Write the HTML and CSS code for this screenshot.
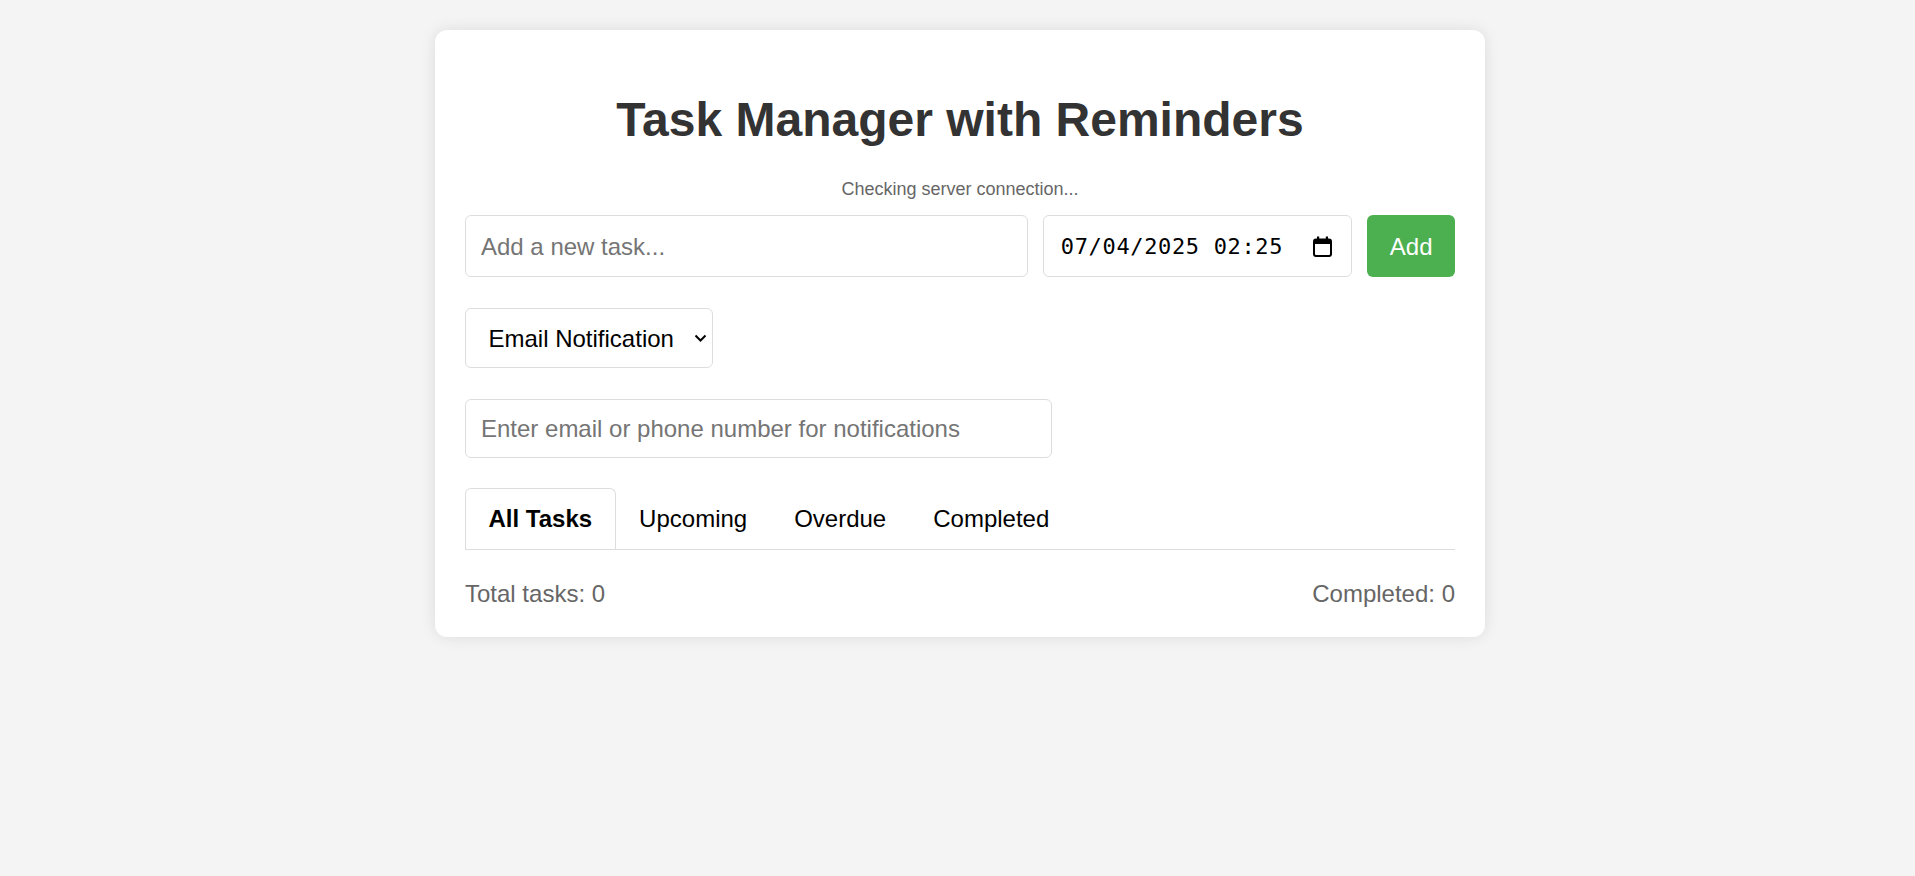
FILE: index.html
```html
<!DOCTYPE html>
<html lang="en">
<head>
<meta charset="utf-8">
<title>Task Manager with Reminders</title>
<link rel="stylesheet" href="styles.css">
</head>
<body>
<div class="container">
  <h1 class="title">Task Manager with Reminders</h1>
  <div class="status">Checking server connection...</div>
  <div class="task-row">
    <input class="field task-input" type="text" placeholder="Add a new task...">
    <div class="field date-box">
      <span class="date-text">07/04/2025 02:25</span>
      <svg class="cal-icon" width="19" height="21" viewBox="0 0 19 21" aria-hidden="true">
        <rect x="1" y="3.5" width="17" height="16.5" rx="2" fill="none" stroke="#000" stroke-width="2"/>
        <rect x="1" y="3.5" width="17" height="4.5" fill="#000"/>
        <rect x="4" y="0.5" width="2.2" height="4" fill="#000"/>
        <rect x="12.8" y="0.5" width="2.2" height="4" fill="#000"/>
      </svg>
    </div>
    <button class="add-btn" type="button">Add</button>
  </div>
  <div class="select-wrap">
    <select class="field notify-select">
      <option>Email Notification</option>
      <option>SMS Notification</option>
    </select>
    <svg class="chevron" width="15" height="10" viewBox="0 0 15 10" aria-hidden="true">
      <polyline points="2.5,2.5 7.5,7.5 12.5,2.5" fill="none" stroke="#000" stroke-width="2"/>
    </svg>
  </div>
  <input class="field contact-input" type="text" placeholder="Enter email or phone number for notifications">
  <div class="tabs">
    <div class="tab active">All Tasks</div>
    <div class="tab">Upcoming</div>
    <div class="tab">Overdue</div>
    <div class="tab">Completed</div>
  </div>
  <div class="stats">
    <span>Total tasks: 0</span>
    <span>Completed: 0</span>
  </div>
</div>
</body>
</html>
```

FILE: styles.css
```css
* {
  box-sizing: border-box;
}

body {
  margin: 0;
  padding: 30px 0 30px 5px;
  background: #f4f4f4;
  font-family: "Liberation Sans", Arial, sans-serif;
  color: #000;
}

.container {
  width: 1050px;
  margin: 0 auto;
  padding: 30px;
  background: #fff;
  border-radius: 12px;
  box-shadow: 0 0 15px rgba(0, 0, 0, 0.1);
}

.title {
  margin: 32px 0;
  font-size: 48px;
  line-height: 55px;
  font-weight: bold;
  text-align: center;
  color: #333;
}

.status {
  margin-bottom: 15px;
  font-size: 18px;
  line-height: 21px;
  text-align: center;
  color: #666;
}

.field {
  border: 1px solid #ddd;
  border-radius: 6px;
  background: #fff;
  font-family: "Liberation Sans", Arial, sans-serif;
  font-size: 24px;
  color: #000;
  outline: none;
}

.field::placeholder {
  color: #757575;
}

.task-row {
  display: flex;
  gap: 15px;
  height: 62px;
  margin-bottom: 31px;
}

.task-input {
  flex: 1;
  min-width: 0;
  padding: 2px 15px 0;
}

.date-box {
  flex: none;
  width: 309px;
  display: flex;
  align-items: center;
  justify-content: space-between;
  padding: 1px 19px 0 16.5px;
}

.date-text {
  font-family: "DejaVu Sans Mono", "Liberation Mono", monospace;
  font-size: 22px;
  letter-spacing: 0.65px;
  color: #000;
}

.cal-icon {
  display: block;
}

.add-btn {
  flex: none;
  padding: 1px 22.5px 0;
  border: none;
  border-radius: 6px;
  background: #4caf50;
  color: #fff;
  font-family: "Liberation Sans", Arial, sans-serif;
  font-size: 24px;
}

.select-wrap {
  position: relative;
  width: 248px;
  height: 60px;
  margin-bottom: 31px;
}

.notify-select {
  appearance: none;
  -webkit-appearance: none;
  width: 100%;
  height: 100%;
  padding: 0 22.5px;
}

.chevron {
  position: absolute;
  right: 5px;
  top: 25px;
  pointer-events: none;
}

.contact-input {
  display: block;
  width: 587px;
  height: 59px;
  padding: 0 15px;
  margin-bottom: 30px;
}

.tabs {
  display: flex;
  border-bottom: 1px solid #ddd;
}

.tab {
  padding: 16px 22.5px 16px;
  font-size: 24px;
  line-height: 27.6px;
  color: #000;
  border: 1px solid transparent;
  border-bottom: none;
  border-radius: 6px 6px 0 0;
}

.tab.active {
  font-weight: bold;
  border-color: #ddd;
  background: #fff;
}

.stats {
  display: flex;
  justify-content: space-between;
  margin-top: 30px;
  font-size: 24px;
  line-height: 27.6px;
  color: #666;
}
```
